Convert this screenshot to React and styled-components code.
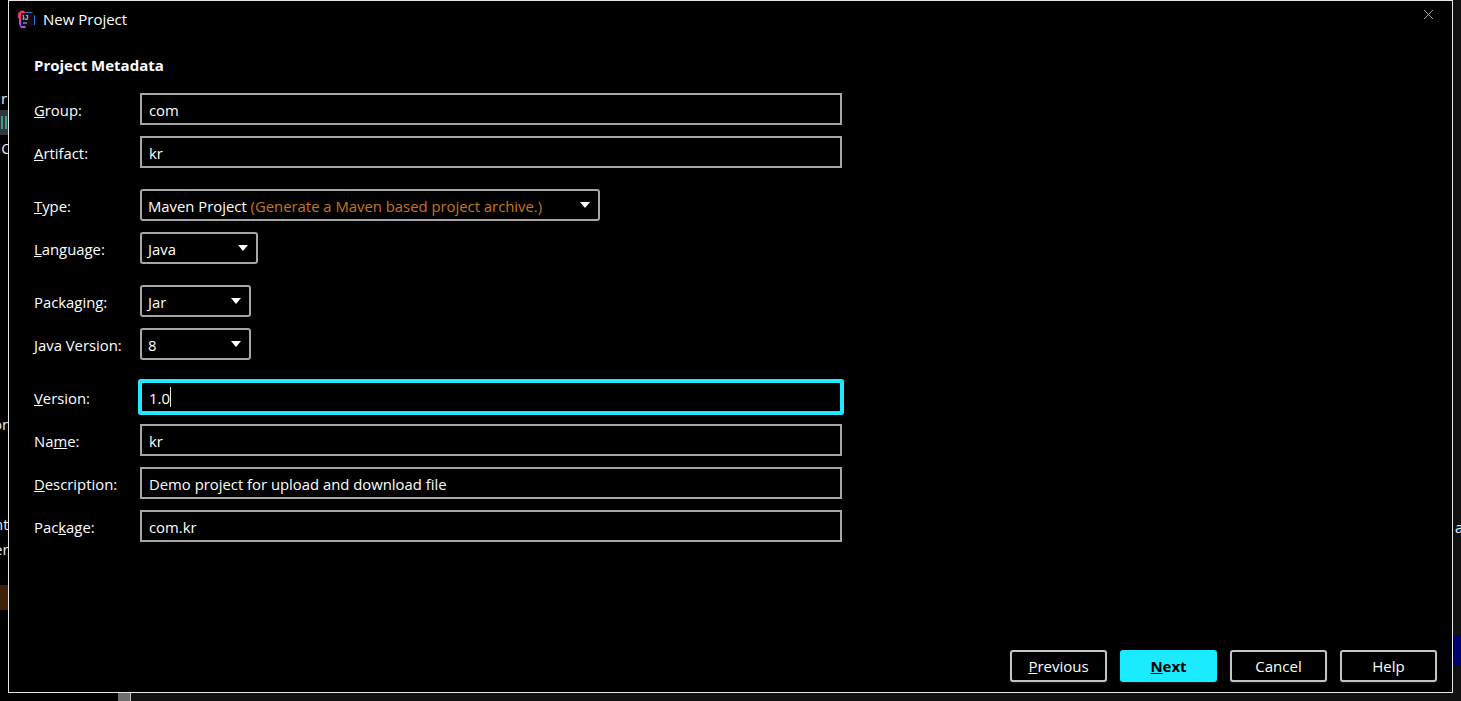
import React from 'react';
import styled, { createGlobalStyle } from 'styled-components';

const GlobalStyle = createGlobalStyle`
  html, body {
    margin: 0;
    padding: 0;
    height: 100%;
    background: #000;
    overflow: hidden;
  }
  #root {
    height: 100%;
  }
`;

const Desktop = styled.div`
  position: relative;
  width: 1461px;
  height: 701px;
  box-sizing: border-box;
  padding: 0 8px 8px;
  background: linear-gradient(90deg, #000 0 130px, #111 130px);
  font-family: 'Open Sans', 'Noto Sans', sans-serif;
  color: #fff;
  overflow: hidden;
`;

// bits of the IDE window showing behind the dialog
const BehindText = styled.span`
  position: absolute;
  left: ${({ $x }) => $x}px;
  top: ${({ $y }) => $y}px;
  font-size: 15px;
  line-height: 18px;
  color: #e4eef6;
`;

const BehindBlock = styled.div`
  position: absolute;
  left: ${({ $x }) => $x}px;
  top: ${({ $y }) => $y}px;
  width: ${({ $w }) => $w}px;
  height: ${({ $h }) => $h}px;
  background: ${({ $bg }) => $bg};
`;

const Dialog = styled.div`
  position: relative;
  box-sizing: border-box;
  width: 1445px;
  height: 693px;
  background: #000;
  border: 1px solid #e6e6e6;
  display: flex;
  flex-direction: column;
`;

const TitleBar = styled.div`
  display: flex;
  align-items: center;
  gap: 7px;
  height: 36px;
  padding: 0 17px 0 8px;
  font-size: 15px;
`;

const TitleText = styled.span`
  flex: 1;
`;

const CloseButton = styled.button`
  display: flex;
  padding: 0;
  margin-top: -9px;
  margin-right: 1px;
  border: none;
  background: none;
`;

const Form = styled.div`
  flex: 1;
  padding: 19px 0 0 25px;
  display: flex;
  flex-direction: column;
`;

const Heading = styled.div`
  font-size: 15px;
  line-height: 18px;
  font-weight: 700;
  margin-bottom: 19px;
`;

const Group = styled.div`
  display: flex;
  flex-direction: column;
  gap: 11px;
  margin-bottom: ${({ $after }) => $after ?? 21}px;
`;

const Row = styled.div`
  display: flex;
  align-items: center;
  height: 32px;
`;

const Label = styled.label`
  width: 106px;
  padding-top: 2px;
  font-size: 14.85px;
  line-height: 18px;
  white-space: nowrap;
`;

const TextField = styled.div`
  box-sizing: border-box;
  width: 702px;
  height: 32px;
  display: flex;
  align-items: center;
  padding: 2px 0 0 7px;
  font-size: 14.85px;
  border: 2px solid ${({ $focused }) => ($focused ? '#1de9ff' : '#a6a6a6')};
  box-shadow: ${({ $focused }) => ($focused ? '0 0 0 2px #1de9ff' : 'none')};
  border-radius: ${({ $focused }) => ($focused ? '1px' : '0')};
`;

const Caret = styled.span`
  width: 1px;
  height: 20px;
  margin-top: -2px;
  background: #e6e6e6;
`;

const Select = styled.div`
  box-sizing: border-box;
  width: ${({ $w }) => $w}px;
  height: 32px;
  display: flex;
  align-items: center;
  justify-content: space-between;
  padding: 2px 8px 0 6px;
  font-size: 14.85px;
  border: 2px solid #a6a6a6;
  border-radius: 3px;
`;

const Hint = styled.span`
  color: #c8761a;
`;

const Arrow = styled.span`
  width: 0;
  height: 0;
  margin-top: -2px;
  border-left: 5.5px solid transparent;
  border-right: 5.5px solid transparent;
  border-top: 6px solid #fff;
`;

const Footer = styled.div`
  display: flex;
  justify-content: flex-end;
  gap: 13px;
  padding: 0 15px 10px 0;
`;

const Button = styled.button`
  box-sizing: border-box;
  width: 97px;
  height: 32px;
  padding: 0;
  font-family: inherit;
  font-size: 15px;
  font-weight: ${({ $primary }) => ($primary ? 700 : 400)};
  color: ${({ $primary }) => ($primary ? '#000' : '#fff')};
  background: ${({ $primary }) => ($primary ? '#1aebff' : '#000')};
  border: 2px solid ${({ $primary }) => ($primary ? '#1aebff' : '#c4c4c4')};
  border-radius: 3px;
  box-shadow: 0 1px 2px rgba(255, 255, 255, 0.12);
`;

const ProjectIcon = () => (
  <svg width="19" height="19" viewBox="0 0 19 19">
    <path d="M1 5a4 4 0 0 1 7-3l3 3-6 7-3-3a4 4 0 0 1-1-4z" fill="#fe315d" />
    <path d="M9 2h6l3 4v9h-6z" fill="#3b6fe8" />
    <path d="M2 9l5 2 2 7H4l-2-4z" fill="#b74af7" />
    <rect x="4" y="3" width="13" height="13" fill="#0d0d12" />
    <text x="5.5" y="10" fontSize="7" fontWeight="700" fontFamily="'Liberation Sans', sans-serif" fill="#c8c8c8">IJ</text>
    <rect x="6" y="12.5" width="4" height="1" fill="#c8c8c8" />
  </svg>
);

const CloseIcon = () => (
  <svg width="11" height="11" viewBox="0 0 11 11">
    <path d="M1 1l9 9M10 1l-9 9" stroke="#a0a0a0" strokeWidth="1" fill="none" />
  </svg>
);

const Field = ({ label, children }) => (
  <Row>
    <Label>{label}</Label>
    {children}
  </Row>
);

const App = () => (
  <Desktop>
    <GlobalStyle />
    <BehindText $x={1} $y={89}>r</BehindText>
    <BehindBlock $x={0} $y={110} $w={8} $h={25} $bg="#33363b" />
    <BehindBlock $x={1} $y={116} $w={2} $h={13} $bg="#3d9c8c" />
    <BehindBlock $x={5} $y={116} $w={2} $h={13} $bg="#3d9c8c" />
    <BehindText $x={-3} $y={139}>IC</BehindText>
    <BehindText $x={-7} $y={415}>or</BehindText>
    <BehindText $x={-6} $y={515}>nt</BehindText>
    <BehindText $x={-6} $y={540}>er</BehindText>
    <BehindBlock $x={0} $y={585} $w={8} $h={25} $bg="#3d2008" />
    <BehindBlock $x={118} $y={693} $w={12} $h={8} $bg="#6e6e6e" />
    <BehindBlock $x={130} $y={693} $w={1} $h={8} $bg="#c0c0c0" />
    <BehindText $x={1455} $y={518}>a</BehindText>
    <BehindBlock $x={1453} $y={635} $w={8} $h={30} $bg="#00006e" />

    <Dialog>
      <TitleBar>
        <ProjectIcon />
        <TitleText>New Project</TitleText>
        <CloseButton aria-label="Close"><CloseIcon /></CloseButton>
      </TitleBar>
      <Form>
        <Heading>Project Metadata</Heading>
        <Group>
          <Field label={<><u>G</u>roup:</>}><TextField>com</TextField></Field>
          <Field label={<><u>A</u>rtifact:</>}><TextField>kr</TextField></Field>
        </Group>
        <Group>
          <Field label={<><u>T</u>ype:</>}>
            <Select $w={460}>
              <span>Maven Project <Hint>(Generate a Maven based project archive.)</Hint></span>
              <Arrow />
            </Select>
          </Field>
          <Field label={<><u>L</u>anguage:</>}>
            <Select $w={118}><span>Java</span><Arrow /></Select>
          </Field>
        </Group>
        <Group>
          <Field label={<>Packa<u>g</u>ing:</>}>
            <Select $w={111}><span>Jar</span><Arrow /></Select>
          </Field>
          <Field label={<><u>J</u>ava Version:</>}>
            <Select $w={111}><span>8</span><Arrow /></Select>
          </Field>
        </Group>
        <Group $after={0}>
          <Field label={<><u>V</u>ersion:</>}>
            <TextField $focused>1.0<Caret /></TextField>
          </Field>
          <Field label={<>Na<u>m</u>e:</>}><TextField>kr</TextField></Field>
          <Field label={<><u>D</u>escription:</>}>
            <TextField>Demo project for upload and download file</TextField>
          </Field>
          <Field label={<>Pac<u>k</u>age:</>}><TextField>com.kr</TextField></Field>
        </Group>
      </Form>
      <Footer>
        <Button><u>P</u>revious</Button>
        <Button $primary><u>N</u>ext</Button>
        <Button>Cancel</Button>
        <Button>Help</Button>
      </Footer>
    </Dialog>
  </Desktop>
);

export default App;
